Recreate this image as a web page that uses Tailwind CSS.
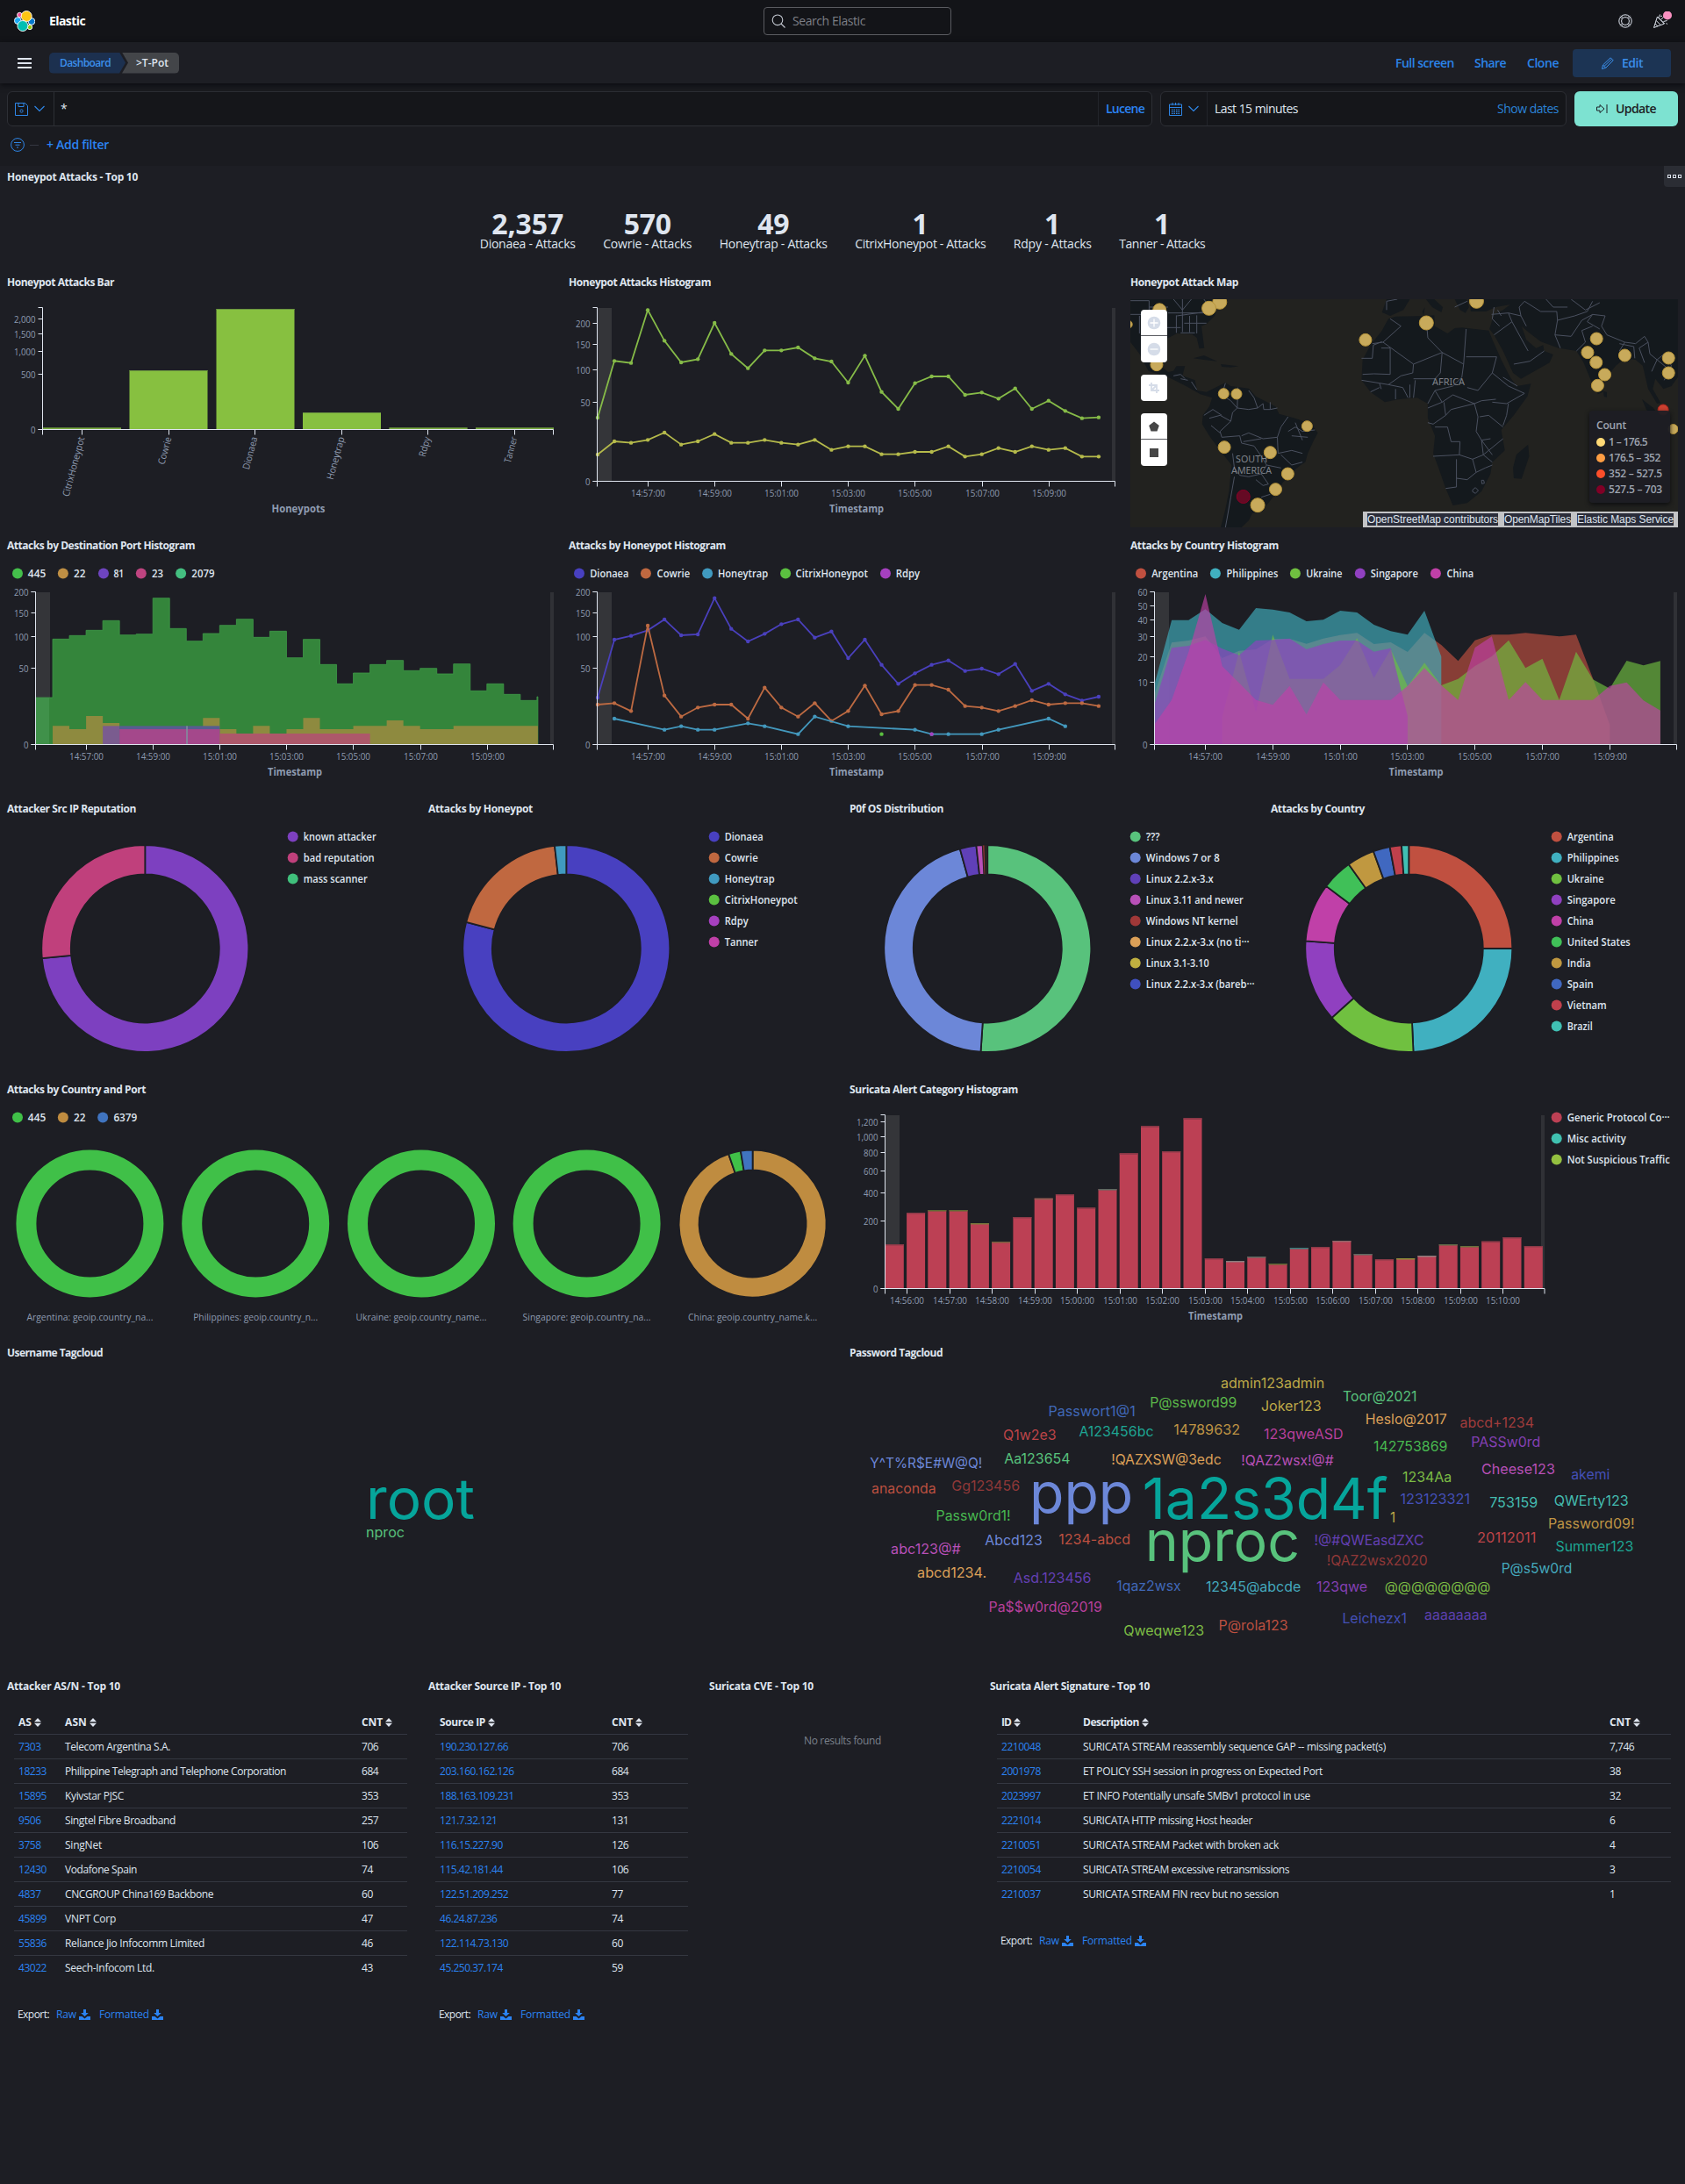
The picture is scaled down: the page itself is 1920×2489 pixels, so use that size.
<!DOCTYPE html>
<html lang="en">
<head>
<meta charset="utf-8">
<title>T-Pot - Elastic</title>
<script src="https://cdn.jsdelivr.net/npm/@tailwindcss/browser@4"></script>
</head>
<body class="w-[1920px] min-h-[2489px] bg-[#1d1e24] font-['Open_Sans','Noto_Sans',sans-serif] font-stretch-90% text-[12px] text-[#dfe5ef] overflow-x-hidden">

<!-- global header -->
<header class="h-12 bg-[#131418] flex items-center justify-between pl-4 pr-[15px]">
  <div class="flex items-center gap-4 w-[333px]">
    <svg class="w-6 h-6" viewBox="0 0 24 24"><g stroke="#fff" stroke-width=".9">
      <circle cx="6.3" cy="5" r="2.7" fill="#f04e98"/><circle cx="4.3" cy="11.6" r="3.9" fill="#1ba9f5"/><circle cx="19.9" cy="12.4" r="3.9" fill="#0077cc"/><circle cx="18" cy="19" r="2.7" fill="#93c90e"/>
      <circle cx="14.2" cy="6.5" r="6" fill="#fec514"/><circle cx="9.9" cy="17.5" r="6" fill="#00bfb3"/></g></svg>
    <span class="text-sm font-bold text-white" data-w="41">Elastic</span>
  </div>
  <div class="w-[214px] h-8 border border-[#5a5b60] rounded flex items-center gap-2 pl-2 text-[#7d7f86] text-sm">
    <svg class="w-4 h-4" viewBox="0 0 16 16" fill="none" stroke="#c5cad3" stroke-width="1.1"><circle cx="7" cy="6.8" r="5.8"/><path d="M11 11l4.5 4.5"/></svg>
    <span data-w="83">Search Elastic</span>
  </div>
  <div class="flex items-center justify-end gap-[23px] w-[300px]">
    <svg class="w-4 h-4" viewBox="0 0 16 16" fill="none" stroke="#dfe5ef"><circle cx="8" cy="8" r="7.2"/><circle cx="8" cy="8" r="4.4"/><path d="M3 1.8l2.6 2.7M13 1.8l-2.6 2.7M3 14.2l2.6-2.7M13 14.2l-2.6-2.7M1.8 3l2.7 2.6M14.2 3l-2.7 2.6M1.8 13l2.7-2.6M14.2 13l-2.7-2.6"/></svg>
    <svg class="w-[22px] h-[22px]" viewBox="0 0 22 22" fill="none" stroke="#dfe5ef"><path d="M5.500 6L1.500 18.500l12-4.500zM4.200 10.500l5 5M3 14l3 3M5.500 6l8 8M7.500 6.500l1-3M10 9l3.500-3.500M12.500 11.500l4-1M9 6l2-1M15.500 13.500l1.500 1"/><circle cx="17" cy="4.500" r="5" fill="#f990c0" stroke="none"/></svg>
  </div>
</header>

<!-- breadcrumbs and page actions -->
<nav class="h-[47px] bg-[#1d1e24] flex items-center justify-between pl-5 pr-4 relative shadow-[0_2px_6px_#0b0c10]">
  <div class="flex items-center">
    <svg class="w-4 h-3 mr-5" viewBox="0 0 16 12"><path d="M0 1h16M0 6h16M0 11h16" stroke="#dfe5ef" stroke-width="2"/></svg>
    <div class="flex h-6 items-center font-semibold">
      <span class="h-6 w-[87px] pl-3 flex items-center rounded-l-[5px] bg-[#1c304f] text-[#3b8eea] [clip-path:polygon(0_0,80px_0,87px_50%,80px_100%,0_100%)]"><span data-w="58">Dashboard</span></span>
      <span class="h-6 w-[65px] -ml-1 pl-4 flex items-center rounded-r-[5px] bg-[#434549] [clip-path:polygon(0_0,100%_0,100%_100%,0_100%,7px_50%)]"><span data-w="37">&gt;T-Pot</span></span>
    </div>
  </div>
  <div class="flex items-center text-sm font-semibold text-[#2b83e8]">
    <span class="w-[90px]"><span data-w="67">Full screen</span></span><span class="w-[60px]"><span data-w="36">Share</span></span><span class="w-[52px]"><span data-w="36">Clone</span></span>
    <button class="w-28 h-8 rounded bg-[#1c3454] text-[#3b8eea] flex items-center justify-center gap-2">
      <svg class="w-4 h-4" viewBox="0 0 16 16" fill="none" stroke="#3b8eea"><path d="M1.500 14.500l1-4.500 8.700-8.200 3 3L5.700 13.300zM2.500 10l3.200 3.300M3.800 11.600l8.800-8.300"/></svg><span data-w="24">Edit</span>
    </button>
  </div>
</nav>

<!-- query bar -->
<section class="bg-[#1a1b20] h-[94px] pt-[9px] px-2">
  <div class="flex h-10 gap-[9px]">
    <div class="w-[1305px] flex border border-[#2d2f35] rounded-md bg-[#15161a]">
      <div class="w-[53px] border-r border-[#2d2f35] flex items-center pl-2 gap-[7px]">
        <svg class="w-[15px] h-[15px]" viewBox="0 0 15 15" fill="none" stroke="#2f86e6"><path d="M.5.5h11l3 3v11H.5zM4 .5v4h6v-4"/><circle cx="7.500" cy="9.500" r="1.600"/></svg>
        <svg class="w-3 h-2" viewBox="0 0 12 8" fill="none" stroke="#2f86e6" stroke-width="1.200"><path d="M.5 1l5.500 5.500L11.500 1"/></svg>
      </div>
      <div class="flex-1 flex items-center pl-[7px] text-sm">*</div>
      <div class="w-[61px] border-l border-[#22242a] flex items-center pl-2 text-sm font-semibold text-[#2b83f2]"><span data-w="44">Lucene</span></div>
    </div>
    <div class="w-[463px] flex border border-[#2d2f35] rounded-md bg-[#15161a]">
      <div class="w-[53px] border-r border-[#22242a] flex items-center pl-[9px] gap-[7px]">
        <svg class="w-[15px] h-[15px]" viewBox="0 0 15 15" fill="none" stroke="#2f86e6"><path d="M.5 2h14v12.500H.5zM.5 5.500h14M4 0v3M7.500 0v3M11 0v3"/><path d="M3 8h9M3 10.200h9M3 12.300h9" stroke-dasharray="1.500 1" stroke-width="1.200"/></svg>
        <svg class="w-3 h-2" viewBox="0 0 12 8" fill="none" stroke="#2f86e6" stroke-width="1.200"><path d="M.5 1l5.500 5.500L11.500 1"/></svg>
      </div>
      <div class="flex-1 flex items-center justify-between pl-2 pr-2 text-sm"><span data-w="95">Last 15 minutes</span><span class="text-[#2b83d8]" data-w="70">Show dates</span></div>
    </div>
    <button class="w-[118px] rounded-md bg-[#7de2d1] text-[#1d1e24] text-sm font-semibold flex items-center justify-center gap-[9px]">
      <svg class="w-[13px] h-3" viewBox="0 0 13 12" fill="none" stroke="#1d1e24"><path d="M.5 4v4h3.500v2.500L9 6 4 1.500V4zM12 1v10"/></svg><span data-w="46">Update</span>
    </button>
  </div>
  <div class="flex items-center h-[42px] pl-1 text-sm font-semibold text-[#2b83f2]">
    <svg class="w-4 h-4" viewBox="0 0 16 16" fill="none" stroke="#2f86e6"><circle cx="8" cy="8" r="7.400"/><path d="M4 5.500h8M5.500 8.200h5M7 11h2"/></svg>
    <span class="w-[10px] h-px bg-[#343741] ml-[6px] mr-[9px]"></span><span data-w="71">+ Add filter</span>
  </div>
</section>

<main class="w-[1920px]">
  <!-- metrics -->
  <section class="h-[120px] relative">
    <h2 class="h-[26px] pl-2 leading-[26px] font-bold text-[12px]"><span data-w="149">Honeypot Attacks - Top 10</span></h2>
    <div class="absolute right-0 top-0 w-6 h-6 bg-[#2b2d34] rounded-bl flex items-center justify-center gap-[2px]"><i class="w-1 h-1 border border-[#dfe5ef]"></i><i class="w-1 h-1 border border-[#dfe5ef]"></i><i class="w-1 h-1 border border-[#dfe5ef]"></i></div>
    <div class="flex justify-center gap-8 pt-6" id="metrics"></div>
  </section>
  <div id="grid"></div>

  <!-- tables -->
  <div class="flex" id="tables"></div>
</main>

<script>
const BG = '#1d1e24', AX = '#8e9bb0';
function T(x, y, s, o = {}) {
  const len = o.len ? ` textLength="${o.len}" lengthAdjust="spacingAndGlyphs"` : '';
  return `<text x="${x}" y="${y}" font-size="${o.size || 12}" fill="${o.fill || '#dfe5ef'}" text-anchor="${o.a || 'start'}" font-weight="${o.w || 400}"${o.font ? ` font-family="${o.font}"` : ''}${o.rot ? ` transform="rotate(${o.rot} ${x} ${y})"` : ''}${len}>${s.replace(/&/g, '&amp;').replace(/</g, '&lt;')}</text>`;
}
const L = (x1, y1, x2, y2, c = '#dfe5ef', w = 1) => `<path d="M${x1} ${y1}L${x2} ${y2}" stroke="${c}" stroke-width="${w}" fill="none"/>`;
const R = (x, y, w, h, c, e = '') => `<rect x="${x}" y="${y}" width="${w}" height="${h}" fill="${c}" ${e}/>`;
// panel: title row, then an svg drawn in page coordinates
function panel(x, y, w, h, title, tw, body) {
  return `<section style="width:${w}px;height:${h}px"><h2 class="h-[26px] pl-2 leading-[26px] font-bold text-[12px]"><span data-w="${tw}">${title}</span></h2><svg class="block" width="${w}" height="${h - 26}" viewBox="${x} ${y + 26} ${w} ${h - 26}">${body}</svg></section>`;
}
function axes(x0, top, bot, x1, yt, xt) {
  let s = L(x0, top, x0, bot) + L(x0 - 5, top, x0, top) + L(x0 - 5, bot, x1, bot) + L(x0, bot, x0, bot + 6) + L(x1, bot, x1, bot + 6);
  for (const [v, y] of yt) s += L(x0 - 5, y, x0, y) + T(x0 - 8, y + 4, v, { a: 'end', size: 11, fill: AX, len: v.length * 5.500 - (v.includes(',') ? 3 : 0) });
  for (const [v, x] of xt) s += L(x, bot, x, bot + 6) + (v ? T(x, bot + 17.500, v, { a: 'middle', size: 11, fill: AX, len: 39 }) : '');
  return s;
}
const stamp = (x, y) => T(x, y, 'Timestamp', { a: 'middle', w: 700, fill: AX, len: 62 });
const hours = (x, step) => ['14:57', '14:59', '15:01', '15:03', '15:05', '15:07', '15:09'].map((v, i) => [v + ':00', Math.round(x + step * i) + .5]);
function hleg(X, y, arr) { return arr.map(([n, c, d, a, b]) => `<circle cx="${X + d / 2.45}" cy="${y}" r="6" fill="${c}"/>` + T(X + a / 2.45, y + 4.500, n, { w: 600, len: (b - a) / 2.45 })).join(''); }
function vleg(x, y, arr) { return arr.map(([n, c, l], i) => `<circle cx="${x}" cy="${y + 24 * i}" r="6" fill="${c}"/>` + T(x + 12, y + 24 * i + 4.500, n, { w: 600, len: l })).join(''); }
function line(pts, c) {
  return `<polyline points="${pts.map(p => p.join()).join(' ')}" fill="none" stroke="${c}" stroke-width="1.800"/>` + pts.map(p => `<circle cx="${p[0]}" cy="${p[1]}" r="2.200" fill="${c}"/>`).join('');
}
const band = (x, t, b, x1) => R(x, t, 16, b - t, '#343539') + R(x1 - 4, t, 4, b - t, '#303136');
function donut(cx, cy, ro, ri, sl) {
  let a = 0, s = '';
  const P = (f, r) => [cx + r * Math.sin(f * 2 * Math.PI), cy - r * Math.cos(f * 2 * Math.PI)];
  if (sl.length == 1) return `<circle cx="${cx}" cy="${cy}" r="${(ro + ri) / 2}" stroke="${sl[0][0]}" stroke-width="${ro - ri}" fill="none"/>`;
  for (const [c, e] of sl) {
    const big = e - a > .5 ? 1 : 0;
    s += `<path d="M${P(a, ro)}A${ro} ${ro} 0 ${big} 1 ${P(e, ro)}L${P(e, ri)}A${ri} ${ri} 0 ${big} 0 ${P(a, ri)}Z" fill="${c}" stroke="${BG}" stroke-width="${e - a < .006 ? .6 : 1.800}"/>`;
    a = e;
  }
  return s;
}

/* ---- metrics ---- */
document.getElementById('metrics').innerHTML = [['2,357', 'Dionaea', 109, 82], ['570', 'Cowrie', 101, 54], ['49', 'Honeytrap', 123, 36], ['1', 'CitrixHoneypot', 149], ['1', 'Rdpy', 89], ['1', 'Tanner', 98]]
  .map(([n, l, w, nw]) => `<div class="text-center" style="width:${w - .5}px"><div class="text-[32px] leading-8 font-bold">${nw ? `<span data-w="${nw}">${n}</span>` : n}</div><div class="text-sm leading-[14px] whitespace-nowrap flex justify-center"><span data-w="${w}">${l} - Attacks</span></div></div>`).join('');

/* ---- row 1 ---- */
let bar = '';
[[49, 89, 487.5], [147.500, 89, 422], [246.500, 89, 352], [345, 89, 470], [443.500, 89, 487.5], [542, 89, 487.500]].forEach(([x, w, y]) => bar += R(x, y, w, 489.500 - y, '#87c040') + R(x, y, w, 1, '#6a9440'));
bar += axes(48.5, 350.5, 489.5, 630.5, [['2,000', 363.500], ['1,500', 380.500], ['1,000', 400.5], ['500', 426.5], ['0', 489.5]], [93.5, 192.5, 290.5, 389.5, 487.5, 586.5].map(x => ['', x]));
[['CitrixHoneypot', 93.5, 70], ['Cowrie', 192.5, 32], ['Dionaea', 290.5, 38], ['Honeytrap', 389.5, 50], ['Rdpy', 487.5, 23], ['Tanner', 586.5, 30]].forEach(([n, x, l]) => bar += T(x + 3, 499, n, { a: 'end', size: 11, fill: AX, rot: -75, len: l }));
bar += T(340, 584, 'Honeypots', { a: 'middle', w: 700, fill: AX, len: 61 });

const xi = (X, i) => X + 41 + 19.030 * i;
const sa = [528,334,341,160,265,339,328,204,310,359,298,298,288,325,336,408,316,440,498,410,387,387,450,442,463,428,498,470,505,530,527];
const sb = [654,609,614,604,579,620,609,584,614,614,604,614,620,604,638,626,626,653,653,645,645,626,661,653,632,645,626,638,632,661,661];
const hist = band(681, 351, 548, 1271) + line(sa.map((v, i) => [xi(640, i), 300 + v / 3]), '#86bb48') + line(sb.map((v, i) => [xi(640, i), 300 + v / 3]), '#b5ba4b')
  + axes(680.5, 350.5, 548.5, 1270.5, [['200', 368.5], ['150', 392.5], ['100', 421.5], ['50', 458.5], ['0', 548.5]], hours(738, 76.100)) + stamp(976, 584);

/* map: outlines are on a finer grid, scaled to the panel */
const land = [
'M20 123H285L262 150 255 180 232 208 218 215 222 252 226 290 212 292 205 255 192 243 150 240 115 262 100 300 98 345 125 372 140 368 148 352 172 352 165 385 200 400 206 435 232 440 252 428 285 408 300 420 350 428 370 455 425 490 435 515 480 530 525 550 543 580 530 610 515 650 508 680 495 690 470 715 445 750 430 780 405 820 385 850 360 855 350 880 330 903H272L285 840 295 780 302 690 270 640 240 590 220 550 222 520 240 490 248 460 215 448 175 420 130 392 70 368 45 310 20 270Z',
'M740 190L760 182 850 180 868 178 870 215 905 240 925 222 945 220 1020 230 1030 260 1055 330 1080 390 1098 420 1138 412 1128 455 1090 520 1055 570 1065 640 1030 680 1025 720 1000 780 960 820 920 828 900 770 880 700 865 650 870 590 850 530 850 480 820 460 770 465 730 475 690 440 665 400 668 330 690 280 722 230Z',
'M1130 620L1133 660 1112 737 1090 735 1088 700 1097 655Z','M735 123L722 168 745 180 782 160 800 123Z','M845 123L862 150 888 168 892 150 868 123Z','M925 123L940 160 955 170 965 150 958 123Z',
'M985 123H1100L1085 140 1040 150 1012 165 970 165 968 140Z',
'M1100 123H1548V390L1530 420 1508 430 1485 395 1478 430 1500 478 1490 480 1465 430 1450 350 1430 330 1400 325 1375 350 1345 395 1338 440 1325 448 1305 400 1285 340 1265 300 1215 290 1165 268 1130 235 1112 215 1125 262 1152 290 1172 280 1175 300 1200 312 1190 340 1110 395 1088 375 1060 300 1035 245 1022 225 1035 175 1060 160Z',
'M195 325L225 315 262 335 225 330Z','M272 345L322 352 300 356 275 354Z','M1448 465L1480 495 1515 560 1490 540 1460 500Z','M1340 438L1350 440 1350 458 1342 456Z','M835 165L842 150 838 180Z'];
const borders = [
'M20 128H72V205M20 175H72M72 150H125M100 150V205M125 170H225M148 178V238M165 123V235M185 180V236M205 178V240M150 180L235 165M160 238H200M120 220H160M45 180V240M72 205L110 238M140 123L165 160 190 123M225 123L240 150M170 205H232',
'M140 385L160 380 172 395M160 395L180 400M190 405L205 432M285 410L275 450 300 470 318 495 305 510 300 540 270 575 275 595M318 495L350 500 375 495 365 460 350 435M375 495L390 480 392 500 410 500 410 475M410 500L430 495M300 540L270 520 240 530M245 555L270 580M275 595L325 590 330 615 365 625 385 660 400 690 385 720 350 730 325 725 310 700 305 650M330 590L350 580 390 600 430 595M430 595L432 650 470 640 500 650M430 595L440 560 460 525M460 575L480 560 500 575 535 570M470 590L515 595M480 545L500 605M440 655L470 690 500 680M385 720L405 755 390 760 370 740M385 800L410 790M310 730L300 800 290 870 285 903M225 520L250 500 275 520M320 425L318 495M335 610L385 600M400 690L440 700',
'M745 190L775 215 725 270 695 275M725 270L810 345 890 305 850 255 845 180M890 305L950 345 957 225M957 320H1042M745 290L745 380 700 378 668 380M745 290L720 290M810 345L808 375 775 385 740 415 715 410M890 305L885 375 870 395 810 395M950 345L945 390 920 420 870 435M1042 320L1030 375 990 435 960 425M665 400L715 410 720 430M740 415L780 425 795 460M760 430V465M800 415V460M815 400L810 460M850 480L870 435 890 475 850 495M890 475L920 450 980 480 1000 470 1040 465M895 475L900 520 865 550 850 545M900 520L915 500 980 480 990 525 985 575 1000 605 1025 600M870 560H905L915 610H940L938 655 865 660M938 655L975 670 1005 655 1060 600M1030 375L1075 420 1120 445 1070 480 1030 475M1075 480L1070 520 1060 555M995 525L1020 520M1020 520L1060 560M1000 605L1030 655M1000 605L1005 655M930 670L930 765 900 770M930 735L960 740 985 715 1010 700 1030 690M975 670L985 715M1005 655L1030 680M690 440L715 425M665 325H695L698 280 722 268M1100 420L1060 390',
'M975 775l8-8 8 10-8 10-8-6zM1000 742l6 0 2 10-7 2zM1028 175L1075 170 1085 200 1035 245M1075 170L1110 180 1125 215M1085 200L1130 300M1090 345L1135 335 1175 300M1110 180L1105 150 1120 130M1120 130L1165 165 1210 165 1212 195 1205 245 1220 290M1212 195L1260 180 1295 165 1310 130M1205 245L1250 250 1280 195 1310 175M1310 175L1345 180 1335 215 1350 245 1400 270 1430 275 1455 250 1465 270 1440 290M1400 270L1385 300M1385 275L1425 285 1428 325M1265 300L1290 270 1280 230 1310 215M1310 175L1295 200 1330 225M1465 270L1470 310 1490 330 1475 370M1490 330L1510 310 1530 350 1510 400M1490 330L1515 355M1440 290L1455 340M1045 160L1055 180M1250 123L1290 160 1330 135M1180 123L1200 150 1240 150M1035 150L1030 190 1050 215M765 123L735 130V160M925 150L960 130M985 123L1000 140'];
const pins = [[101,160,8],[269,133,8.500],[239,154,8.500],[93,347,7.500],[280,446,6.500],[316,447,6.500],[513,557,6.500],[282,629,7.500],[410,647,7.500],[459,720,7.500],[425,773,7.500],[375,827,8.500],[335,798,8,1],[676,262,7.500],[846,204,8.500],[986,130,8.500],[1321,258,7.500],[1296,305,7.500],[1320,339,7.500],[1400,315,7.500],[1344,381,7.500],[1324,418,7.500],[1522,324,7.500],[1522,375,7.500],[1507,501,6.500,2],[1535,567,6],[14,209,5]];
const map = `<clipPath id="mc"><rect x="1288" y="341" width="624" height="260"/></clipPath><g clip-path="url(#mc)">` + R(1288, 341, 624, 260, '#22221f')
 + `<g transform="translate(1280 300) scale(.40816 .33333)"><path d="${land.join('')}" fill="#14191d"/><path d="${borders.join('')}" fill="none" stroke="#4b5160" stroke-width="1" vector-effect="non-scaling-stroke"/></g>`
 + [['AFRICA', 908, 418, 37], ['SOUTH', 358, 681, 36], ['AMERICA', 358, 719, 46]].map(([n, x, y, l]) => T(1280 + x / 2.45, 300 + y / 3, n, { a: 'middle', size: 10.500, fill: '#7f828a', len: l, font: 'Noto Sans' })).join('')
 + pins.map(([x, y, r, k]) => `<circle cx="${1280 + x / 2.45}" cy="${300 + y / 3}" r="${r - .5}" fill="${k == 1 ? '#650a24' : k == 2 ? '#cc4130' : '#c8aa5b'}" stroke="${k == 1 ? '#8a0026' : k == 2 ? '#b3261e' : '#b8953a'}"/>`).join('') + '</g>';
const mapPanel = `<section class="w-[640px] h-[300px] relative"><h2 class="h-[26px] pl-2 leading-[26px] font-bold text-[12px]"><span data-w="123">Honeypot Attack Map</span></h2><svg class="block" width="640" height="274" viewBox="1280 335 640 274">${map}</svg>
 <div class="absolute left-5 top-[44px] w-[30px] flex flex-col">
  <div class="h-[30px] bg-white rounded-t-sm border-b border-[#5a5b60] flex items-center justify-center"><svg class="w-4 h-4" viewBox="0 0 16 16"><circle cx="8" cy="8" r="7.300" fill="#d5dce8"/><path d="M3.500 8h9M8 3.500v9" stroke="#fff" stroke-width="1.300"/></svg></div>
  <div class="h-[30px] bg-white rounded-b-sm flex items-center justify-center"><svg class="w-4 h-4" viewBox="0 0 16 16"><circle cx="8" cy="8" r="7.300" fill="#d5dce8"/><path d="M3.500 8h9" stroke="#fff" stroke-width="1.300"/></svg></div>
  <div class="h-[30px] mt-[14px] bg-white rounded-sm flex items-center justify-center"><svg class="w-3 h-3" viewBox="0 0 12 12" fill="none" stroke="#d5dce8" stroke-width="1.800"><path d="M3 0v9h9M0 3h9v9M4 8l5-5"/></svg></div>
  <div class="h-[30px] mt-[14px] bg-white rounded-t-sm border-b border-[#5a5b60] flex items-center justify-center"><svg class="w-3 h-3" viewBox="0 0 12 12"><path d="M6 .5l5.800 4.500-2.300 6.500h-7L.2 5z" fill="#464646"/></svg></div>
  <div class="h-[30px] bg-white rounded-b-sm flex items-center justify-center"><i class="w-[10px] h-[10px] bg-[#464646]"></i></div>
 </div>
 <div class="absolute left-[531px] top-[159px] w-[92px] h-[105px] rounded bg-[#1d1e24]/95 shadow-[0_2px_5px_#0c0d10] pl-2 pt-[7px] font-semibold text-[#9da4b0] leading-[18px]">
  <div class="leading-5"><span data-w="34">Count</span></div>
  ${[['#fed976', '1 – 176.5', 44], ['#fd9d43', '176.5 – 352', 59], ['#fc4e2a', '352 – 527.5', 61], ['#800026', '527.5 – 703', 61]].map(([c, t, w]) => `<div class="flex items-center gap-1 h-[18px]"><i class="w-[10px] h-[10px] rounded-full" style="background:${c}"></i><span data-w="${w}">${t}</span></div>`).join('')}
 </div>
 <div class="absolute left-[273px] top-[274px] w-[359px] h-[18px] bg-[#c3c4c6] flex items-center gap-[7px] pl-[5px] font-['Liberation_Sans',sans-serif] text-[12px] leading-[14px] text-[#dfe5ef]"><span class="bg-[#2b2d3a]" data-w="149">OpenStreetMap contributors</span><span class="bg-[#2b2d3a]" data-w="76">OpenMapTiles</span><span class="bg-[#2b2d3a]" data-w="110">Elastic Maps Service</span></div>
</section>`;

/* ---- row 2 ---- */
const yt2 = [['200', 674.5], ['150', 698.5], ['100', 725.5], ['50', 761.5], ['0', 848.5]];
const Y = v => 610 + v / 3;
const g445 = [555,355,343,325,292,341,338,215,319,362,336,308,287,349,328,419,356,442,508,471,442,428,463,455,474,440,532,508,544,565];
const g22 = [0,652,663,618,642,675,675,675,675,675,625,663,690,652,690,663,625,663,663,652,652,633,652,663,663,652,652,652,652,652];
let dest = band(41, 675, 848, 631), sp = `M41 848`, sk = `M${xi(0, 1)} 848`;
g445.forEach((v, i) => sp += `L${xi(0, i)} ${Y(v)}L${xi(0, i + 1)} ${Y(v)}`);
g22.forEach((v, i) => { if (i) sk += `L${xi(0, i)} ${Y(v)}L${xi(0, i + 1)} ${Y(v)}`; });
dest += `<path d="${sp}V794h1V848Z" fill="#34853b" stroke="#3f9a47" stroke-width=".8"/>` + R(41, Y(555), 15, 53, '#40914a')
 + `<path d="${sk}h1V848Z" fill="#8e8a3f"/>` + R(xi(0, 4), Y(652), xi(0, 5) - xi(0, 4), 21, '#7a5c8f') + R(xi(0, 5), Y(652), xi(0, 11) - xi(0, 5), 21, '#575e8f')
 + R(xi(0, 5), Y(663), xi(0, 11) - xi(0, 5), 17.500, '#a4488b') + R(xi(0, 11), Y(678), xi(0, 20) - xi(0, 11), 12.500, '#ad586a') + R(xi(0, 9), Y(652), 1.500, 21, '#7f93a0')
 + axes(40.5, 674.5, 848.5, 630.5, yt2, hours(98, 76.100)) + stamp(336, 884)
 + hleg(0, 653.5, [['445', '#44bf4b', 49, 78, 128], ['22', '#bf8f44', 176, 206, 239], ['81', '#6e44bf', 289, 317, 346], ['23', '#bf4480', 394, 424, 456], ['2079', '#44bf80', 505, 535, 599]]);

const dio = [555,357,344,325,288,342,339,215,320,363,337,304,288,350,329,420,357,443,508,472,443,428,464,456,475,440,532,508,544,565,552];
const cow = [579,574,601,309,548,620,589,579,579,627,521,589,620,574,635,601,514,612,601,512,512,528,584,589,601,584,564,579,574,574,584];
const htr = [[1,627],[4,665],[5,653],[6,665],[7,665],[9,643],[10,653],[12,680],[13,620],[15,653],[19,665],[20,680],[21,680],[23,680],[24,665],[27,627],[28,653]];
const byhp = band(681, 675, 848, 1271) + line(dio.map((v, i) => [xi(640, i), Y(v)]), '#4a40bd') + line(cow.map((v, i) => [xi(640, i), Y(v)]), '#bd6a42')
 + line(htr.map(([i, v]) => [xi(640, i), Y(v)]), '#4398bd') + line([[xi(640, 17), Y(680)]], '#5bc040') + line([[xi(640, 20), Y(680)]], '#a640c0')
 + axes(680.5, 674.5, 848.5, 1270.5, yt2, hours(738, 76.100)) + stamp(976, 884)
 + hleg(640, 653.5, [['Dionaea', '#4840c0', 49, 79, 187], ['Cowrie', '#c06840', 235, 266, 358], ['Honeytrap', '#409ac0', 407, 436, 576], ['CitrixHoneypot', '#5bc040', 625, 653, 855], ['Rdpy', '#a640c0', 904, 933, 1000]]);

const area = (st, a, c) => { const X = i => 1315.9 + 19.200 * i; return `<path d="M${X(st)} 848${a.map((v, i) => `L${X(st + i)} ${Y(v)}`).join('')}V848Z" fill="${c}" fill-opacity=".65"/>`; };
const ctry = band(1316, 675, 848, 1911)
 + area(0, [540,367,360,346,420,395,390,355,354,371,353,341,334,372,366,399,334,375,430,359,340,340,334,340,346,340,490,648], '#c05040')
 + area(0, [505,290,290,253,300,323,249,254,264,294,289,258,264,306,328,340,258,415], '#40b0c0')
 + area(4, [620,398,605,340,491,491,491,444,352,488,390,516,436,513,491,447,414,359,454,422,563,398,493,524,429,445,430], '#70c040')
 + area(0, [575,385,378,358,388,410,360,358,353,390,372,360,360,398,386,618], '#9040c0')
 + area(0, [645,563,400,201,448,505,563,580,515,613,503,563,563,563,563,515,454,513,563,384,346,563,502,563,563,563,563,515,503,565,599], '#c040a8')
 + axes(1315.5, 674.5, 848.5, 1910.5, [['60', 674.5], ['50', 690.5], ['40', 706.5], ['30', 725.5], ['20', 748.5], ['10', 777.5], ['0', 848.5]], hours(1373, 76.800)) + stamp(1613.500, 884)
 + hleg(1280, 653.5, [['Argentina', '#c05040', 49, 79, 209], ['Philippines', '#40b0c0', 257, 288, 432], ['Ukraine', '#70c040', 480, 510, 611], ['Singapore', '#9040c0', 661, 690, 823], ['China', '#c040a8', 872, 903, 978]]);

/* ---- row 3 ---- */
const d = (x, s) => donut(x, 1081, 118, 84.500, s);
const r3 = panel(0, 909, 480, 320, 'Attacker Src IP Reputation', 147, d(165.3, [['#7d40c0', .735], ['#c0407c', 1]]) + vleg(333.7, 953.5, [['known attacker', '#7d40c0', 83], ['bad reputation', '#c0407c', 81], ['mass scanner', '#40c07c', 73]]))
 + panel(480, 909, 480, 320, 'Attacks by Honeypot', 119, d(645.3, [['#4840c0', .791], ['#c06840', .982], ['#409ac0', 1]]) + vleg(813.7, 953.5, [['Dionaea', '#4840c0', 44], ['Cowrie', '#c06840', 38], ['Honeytrap', '#409ac0', 57], ['CitrixHoneypot', '#5bc040', 83], ['Rdpy', '#a640c0', 27], ['Tanner', '#c040a8', 38]]))
 + panel(960, 909, 480, 320, 'P0f OS Distribution', 107, d(1125.3, [['#58c27c', .5105], ['#6c87d8', .957], ['#6040b8', .9826], ['#b850b8', .9925], ['#a03838', .9955], ['#2c2424', 1]]) + vleg(1293.7, 953.5, [['???', '#58c27c', 16], ['Windows 7 or 8', '#6c87d8', 84], ['Linux 2.2.x-3.x', '#6040b8', 77], ['Linux 3.11 and newer', '#b850b8', 111], ['Windows NT kernel', '#a03838', 105], ['Linux 2.2.x-3.x (no ti···', '#dca058', 118], ['Linux 3.1-3.10', '#c0b040', 72], ['Linux 2.2.x-3.x (bareb···', '#4050c0', 124]]))
 + panel(1440, 909, 480, 320, 'Attacks by Country', 107, d(1605.3, [['#c05040', .25], ['#40b0c0', .493], ['#70c040', .6335], ['#9040c0', .7617], ['#c040a8', .853], ['#40c058', .9014], ['#c09840', .9444], ['#4068c0', .9706], ['#c0404c', .9888], ['#40c0b4', 1]]) + vleg(1773.7, 953.5, [['Argentina', '#c05040', 53], ['Philippines', '#40b0c0', 59], ['Ukraine', '#70c040', 42], ['Singapore', '#9040c0', 55], ['China', '#c040a8', 30], ['United States', '#40c058', 72], ['India', '#c09840', 27], ['Spain', '#4068c0', 30], ['Vietnam', '#c0404c', 45], ['Brazil', '#40c0b4', 29]]));

/* ---- row 4 ---- */
const small = [['Argentina: geoip.country_na...', 102.4], ['Philippines: geoip.country_n...', 291.2], ['Ukraine: geoip.country_name...', 480], ['Singapore: geoip.country_na...', 668.6], ['China: geoip.country_name.k...', 857.6]]
 .map(([n, x], i) => donut(x, 1394.500, 84, 61, i < 4 ? [['#40c048']] : [['#bf8c40', .947], ['#40c048', .974], ['#4074c0', 1]]) + T(x, 1505, n, { a: 'middle', size: 11, fill: AX, len: i == 3 ? 146 : i == 1 ? 142 : i == 4 ? 147 : i == 2 ? 149 : 144 })).join('')
 + hleg(0, 1273.5, [['445', '#40c048', 49, 78, 128], ['22', '#bf8c40', 176, 206, 239], ['6379', '#4074c0', 287, 317, 383]]);
const sur = [594,486,477,477,522,585,501,437,423,469,405,283,190,276,163,642,651,636,660,606,603,582,627,645,642,633,594,600,584,570,600];
const tip = { 2: '#5d6b34', 3: '#5d6b34', 4: '#7d7a3c', 5: '#77603f', 7: '#8a6052', 10: '#5c6a62', 16: '#8b7f7f', 17: '#5c6a62', 18: '#5d6b34', 19: '#35807e', 21: '#93686a', 22: '#5c6a62', 24: '#8f8f38', 25: '#937f7f', 26: '#5f6c49', 27: '#67713c' };
const surc = band(1009, 1271, 1468, 1760) + sur.map((v, i) => { const x = 1008.8 + 24.265 * i, y = 1220 + v / 3; return R(x.toFixed(1), y, 21, 1468.500 - y, '#bc4054') + R(x.toFixed(1), y, 21, 1.500, tip[i] || '#8b3a48'); }).join('')
 + axes(1008.5, 1270.5, 1468.5, 1760, [['1,200', 1278.5], ['1,000', 1295.5], ['800', 1313.5], ['600', 1334.5], ['400', 1359.5], ['200', 1391.5], ['0', 1468.5]], Array.from({ length: 15 }, (_, k) => [(k < 4 ? '14:5' + (6 + k) : '15:' + String(k - 4).padStart(2, '0')) + ':00', Math.round(1033.000 + 48.530 * k) + .5]))
 + stamp(1385, 1504) + vleg(1773.7, 1273.5, [['Generic Protocol Co···', '#bc4054', 117], ['Misc activity', '#40c0b0', 67], ['Not Suspicious Traffic', '#94c040', 117]]);

/* ---- row 5: tag clouds; word, left, right, baseline, colour, size ---- */
const words = [['admin123admin',704,897,155,'#bda948'],['P@ssword99',572,734,221,'#5cb84a'],['Joker123',779,891,234,'#bda948'],['Toor@2021',931,1069,201,'#58c27c'],['Passwort1@1',383,545,251,'#4068b8'],['Heslo@2017',973,1125,278,'#dca058'],['abcd+1234',1149,1287,291,'#a03c3c'],['Q1w2e3',299,398,334,'#bc4448'],['A123456bc',440,579,320,'#1ea593'],['14789632',616,740,315,'#bf9444'],['123qweASD',784,932,329,'#b8409c'],['142753869',988,1126,371,'#48b850'],['PASSw0rd',1170,1299,357,'#8440b4'],['Y^T%R$E#W@Q!',51,260,428,'#6c87d8'],['Aa123654',301,424,413,'#58c27c'],['!QAZXSW@3edc',500,705,416,'#dca058'],['!QAZ2wsx!@#',742,914,421,'#b850b8'],['Cheese123',1189,1326,449,'#b850b8'],['1234Aa',1042,1134,476,'#7cbc44'],['akemi',1356,1428,467,'#4450b8'],['anaconda',54,174,515,'#bc5040'],['Gg123456',203,330,506,'#8f3838'],['123123321',1038,1168,551,'#4450b8'],['753159',1204,1294,563,'#44bcb0'],['QWErty123',1324,1463,557,'#44bcb0'],['Passw0rd1!',174,313,608,'#48b850'],['1',1019,1029,616,'#bda948'],['Password09!',1313,1474,635,'#bf9444'],['abc123@#',90,220,722,'#b850b8'],['Abcd123',265,372,692,'#6c87d8'],['1234-abcd',402,536,689,'#bc5040'],['!@#QWEasdZXC',878,1082,692,'#6440b4'],['20112011',1181,1291,683,'#bc4448'],['Summer123',1327,1472,713,'#1ea593'],['!QAZ2wsx2020',901,1089,761,'#8f3838'],['P@s5w0rd',1226,1358,788,'#44a8bc'],['abcd1234.',139,268,803,'#dca058'],['Asd.123456',318,463,821,'#6440b4'],['1qaz2wsx',510,630,849,'#4068b8'],['12345@abcde',676,853,851,'#44a8bc'],['123qwe',882,977,851,'#8440b4'],['@@@@@@@@',1009,1206,851,'#7cbc44'],['Pa$$w0rd@2019',272,483,920,'#b8409c'],['Leichezx1',930,1050,960,'#4450b8'],['aaaaaaaa',1083,1200,948,'#5c40b0'],['Qweqwe123',523,673,1002,'#7cbc44'],['P@rola123',700,829,983,'#bc5040'],['ppp',348,541,582,'#6c87d8',64],['1a2s3d4f',558,1015,603,'#06a59b',64],['nproc',563,851,747,'#58c27c',64]];
const F = 'Inter, sans-serif';
const cloud = words.map(([n, a, b, y, c, s]) => T(960 + a / 1.6333, 1530 + y / 3, n, { size: s || 16, fill: c, len: ((b - a) / 1.6333).toFixed(1), font: F })).join('');
const cloud1 = T(417, 1731, 'root', { size: 64, fill: '#06a59b', len: 124, font: F }) + T(417, 1752, 'nproc', { size: 16, fill: '#58c27c', len: 44, font: F });

const rows = [
 panel(0, 309, 640, 300, 'Honeypot Attacks Bar', 122, bar) + panel(640, 309, 640, 300, 'Honeypot Attacks Histogram', 162, hist) + mapPanel,
 panel(0, 609, 640, 300, 'Attacks by Destination Port Histogram', 214, dest) + panel(640, 609, 640, 300, 'Attacks by Honeypot Histogram', 179, byhp) + panel(1280, 609, 640, 300, 'Attacks by Country Histogram', 169, ctry),
 r3,
 panel(0, 1229, 960, 300, 'Attacks by Country and Port', 158, small) + panel(960, 1229, 960, 300, 'Suricata Alert Category Histogram', 192, surc),
 panel(0, 1529, 960, 380, 'Username Tagcloud', 109, cloud1) + panel(960, 1529, 960, 380, 'Password Tagcloud', 106, cloud)];
document.getElementById('grid').innerHTML = rows.map(r => `<div class="flex">${r}</div>`).join('');

/* ---- tables ---- */
const sort = `<svg class="w-2 h-[10px] ml-[3px]" viewBox="0 0 8 10"><path d="M4 0l4 4.300H0zM4 10l4-4.300H0z" fill="#dfe5ef"/></svg>`;
const dl = `<svg class="w-[13px] h-3 ml-[3px]" viewBox="0 0 13 12" fill="#2b83f2"><path d="M5 0h3v4h2.800L6.500 8 2.200 4H5zM0 8h3.500l3 2.500L9.500 8H13v4H0z"/></svg>`;
const numW = s => [...String(s)].reduce((a, c) => a + (c == '.' || c == ',' ? 2.600 : 6.400), 0);
function table(w, title, tw, cls, hd, data) {
  const cell = (c, j) => { const [t, l] = Array.isArray(c) ? c : [c, numW(c)]; return `<span class="whitespace-nowrap ${j ? '' : 'text-[#2b83f2]'}"><span data-w="${l}">${t}</span></span>`; };
  return `<section style="width:${w}px"><h2 class="h-[26px] pl-2 leading-[26px] font-bold text-[12px]"><span data-w="${tw}">${title}</span></h2>
  <div class="px-4 pt-[14px]"><div class="grid ${cls} h-7 items-center pl-[5px] font-bold border-b border-[#343741]">${hd.map(([h, l]) => `<span class="flex items-center"><span data-w="${l}">${h}</span>${sort}</span>`).join('')}</div>
  ${data.map((r, i) => `<div class="grid ${cls} h-7 items-center pl-[5px] ${i < data.length - 1 ? 'border-b border-[#343741]' : ''}">${r.map(cell).join('')}</div>`).join('')}
  <div class="flex items-center pt-[30px] pl-1"><span data-w="36">Export:</span><span class="ml-2 text-[#2b83f2] flex items-center"><span data-w="23">Raw</span>${dl}</span><span class="ml-[10px] text-[#2b83f2] flex items-center"><span data-w="57">Formatted</span>${dl}</span></div></div></section>`;
}
document.getElementById('tables').innerHTML =
 table(480, 'Attacker AS/N - Top 10', 129, 'grid-cols-[53px_338px_52px]', [['AS', 15], ['ASN', 25], ['CNT', 24]], [['7303', ['Telecom Argentina S.A.', 120], 706], ['18233', ['Philippine Telegraph and Telephone Corporation', 252], 684], ['15895', ['Kyivstar PJSC', 67], 353], ['9506', ['Singtel Fibre Broadband', 126], 257], ['3758', ['SingNet', 42], 106], ['12430', ['Vodafone Spain', 82], 74], ['4837', ['CNCGROUP China169 Backbone', 169], 60], ['45899', ['VNPT Corp', 58], 47], ['55836', ['Reliance Jio Infocomm Limited', 159], 46], ['43022', ['Seech-Infocom Ltd.', 102], 43]])
 + table(320, 'Attacker Source IP - Top 10', 151, 'grid-cols-[196px_80px]', [['Source IP', 52], ['CNT', 24]], [['190.230.127.66', 706], ['203.160.162.126', 684], ['188.163.109.231', 353], ['121.7.32.121', 131], ['116.15.227.90', 126], ['115.42.181.44', 106], ['122.51.209.252', 77], ['46.24.87.236', 74], ['122.114.73.130', 60], ['45.250.37.174', 59]])
 + `<section class="w-80"><h2 class="h-[26px] pl-2 leading-[26px] font-bold text-[12px]"><span data-w="119">Suricata CVE - Top 10</span></h2><div class="flex justify-center pt-10 text-[#7b818c]"><span data-w="88">No results found</span></div></section>`
 + table(800, 'Suricata Alert Signature - Top 10', 182, 'grid-cols-[93px_600px_60px]', [['ID', 11], ['Description', 64], ['CNT', 24]], [['2210048', ['SURICATA STREAM reassembly sequence GAP -- missing packet(s)', 345], '7,746'], ['2001978', ['ET POLICY SSH session in progress on Expected Port', 273], 38], ['2023997', ['ET INFO Potentially unsafe SMBv1 protocol in use', 259], 32], ['2221014', ['SURICATA HTTP missing Host header', 193], 6], ['2210051', ['SURICATA STREAM Packet with broken ack', 223], 4], ['2210054', ['SURICATA STREAM excessive retransmissions', 235], 3], ['2210037', ['SURICATA STREAM FIN recv but no session', 223], 1]]);

/* keep labels at their set widths whatever the font's own metrics */
function fit() {
  const els = [...document.querySelectorAll('[data-w]')];
  els.forEach(e => { e.style.display = 'inline-block'; e.style.whiteSpace = 'nowrap'; e.style.flex = 'none'; e.style.letterSpacing = '0px'; });
  const ns = els.map(e => e.getBoundingClientRect().width);
  els.forEach((e, i) => { e.style.letterSpacing = ((+e.dataset.w - ns[i]) / e.textContent.length).toFixed(3) + 'px'; });
}
fit();
addEventListener('load', fit);
document.fonts.ready.then(fit);
new ResizeObserver(fit).observe(document.querySelector('header'));
[0, 50, 200].forEach(ms => setTimeout(fit, ms));
</script>
</body>
</html>
